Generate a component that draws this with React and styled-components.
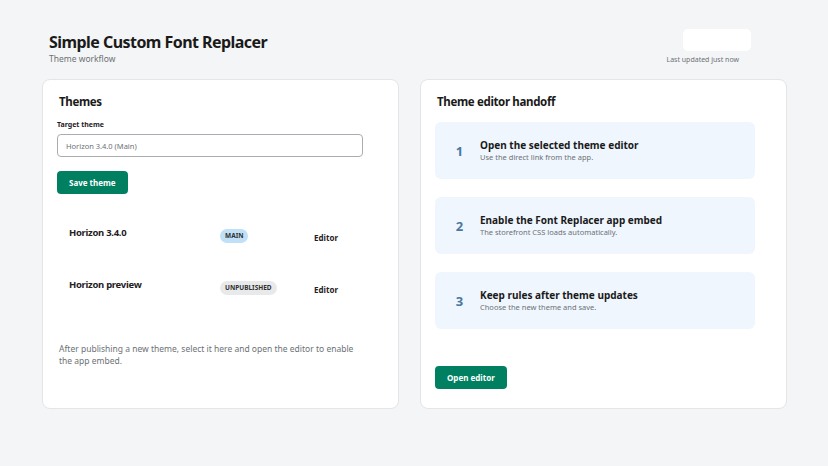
import styled, { createGlobalStyle } from 'styled-components';

const GlobalStyle = createGlobalStyle`
  body {
    margin: 0;
    background: #f4f5f7;
    font-family: 'Noto Sans', 'Open Sans', sans-serif;
    color: #1f2124;
  }
`;

const themes = [
  { name: 'Horizon 3.4.0', role: 'MAIN', tone: 'main' },
  { name: 'Horizon preview', role: 'UNPUBLISHED', tone: 'draft' },
];

const steps = [
  { title: 'Open the selected theme editor', text: 'Use the direct link from the app.' },
  { title: 'Enable the Font Replacer app embed', text: 'The storefront CSS loads automatically.' },
  { title: 'Keep rules after theme updates', text: 'Choose the new theme and save.' },
];

const App = () => {
  return (
    <Page>
      <GlobalStyle />
      <Header>
        <div>
          <Title>Simple Custom Font Replacer</Title>
          <Subtitle>Theme workflow</Subtitle>
        </div>
        <Status>
          <StatusBox />
          <StatusText>Last updated just now</StatusText>
        </Status>
      </Header>
      <Columns>
        <Card>
          <CardTitle>Themes</CardTitle>
          <Label htmlFor="theme">Target theme</Label>
          <Select id="theme">Horizon 3.4.0 (Main)</Select>
          <Button type="button">Save theme</Button>
          <ThemeList>
            {themes.map((t) => (
              <ThemeRow key={t.name}>
                <ThemeName>{t.name}</ThemeName>
                <Badge $tone={t.tone}>{t.role}</Badge>
                <EditorLink>Editor</EditorLink>
              </ThemeRow>
            ))}
          </ThemeList>
          <Note>
            After publishing a new theme, select it here and open the editor to enable
            the app embed.
          </Note>
        </Card>
        <Card>
          <CardTitle $right>Theme editor handoff</CardTitle>
          <Steps>
            {steps.map((s, i) => (
              <Step key={s.title}>
                <StepNum>{i + 1}</StepNum>
                <div>
                  <StepTitle>{s.title}</StepTitle>
                  <StepText>{s.text}</StepText>
                </div>
              </Step>
            ))}
          </Steps>
          <Button type="button" $bottom>Open editor</Button>
        </Card>
      </Columns>
    </Page>
  );
};

export default App;

const Page = styled.div`
  padding: 29px 42px 0;
`;

const Header = styled.header`
  display: flex;
  justify-content: space-between;
  align-items: flex-start;
  padding: 0 35px 0 7px;
  height: 50px;
`;

const Title = styled.h1`
  margin: 3px 0 0;
  font-size: 16px;
  font-weight: 700;
  letter-spacing: -0.55px;
  line-height: 21px;
  color: #1a1a1a;
`;

const Subtitle = styled.div`
  font-size: 8.5px;
  color: #6d7175;
  line-height: 11px;
`;

const Status = styled.div`
  display: flex;
  flex-direction: column;
  align-items: flex-end;
`;

const StatusBox = styled.div`
  width: 68px;
  height: 22px;
  background: #fff;
  border-radius: 5px;
`;

const StatusText = styled.div`
  margin: 4px 12px 0 0;
  font-size: 7px;
  color: #6d7175;
`;

const Columns = styled.div`
  display: grid;
  grid-template-columns: 357px 367px;
  gap: 21px;
`;

const Card = styled.section`
  height: 330px;
  box-sizing: border-box;
  background: #fff;
  border: 1px solid #e4e5e7;
  border-radius: 8px;
  padding: 14px 14px;
  display: flex;
  flex-direction: column;
  align-items: flex-start;
`;

const CardTitle = styled.h2`
  margin: 0 0 ${(p) => (p.$right ? '12px' : '10px')} 2px;
  font-size: 11.5px;
  font-weight: 700;
  letter-spacing: -0.35px;
  line-height: 16px;
  color: #1a1a1a;
`;

const Label = styled.label`
  font-size: 7px;
  font-weight: 700;
  margin-bottom: 5px;
  line-height: 9px;
`;

const Select = styled.div`
  width: 306px;
  height: 23px;
  box-sizing: border-box;
  border: 1px solid #a9acb0;
  border-radius: 4px;
  padding: 0 8px;
  font-size: 7.5px;
  color: #6d7175;
  display: flex;
  align-items: center;
`;

const Button = styled.button`
  margin-top: ${(p) => (p.$bottom ? 'auto' : '14px')};
  margin-bottom: ${(p) => (p.$bottom ? '5px' : '0')};
  height: 23px;
  padding: 0 12px;
  border: none;
  border-radius: 4px;
  background: #008060;
  color: #fff;
  font-family: inherit;
  font-size: 8px;
  font-weight: 700;
  cursor: pointer;
`;

const ThemeList = styled.div`
  margin-top: 32px;
  width: 100%;
  display: flex;
  flex-direction: column;
  gap: 34px;
`;

const ThemeRow = styled.div`
  display: grid;
  grid-template-columns: 151px 94px 1fr;
  align-items: start;
  padding-left: 12px;
`;

const ThemeName = styled.div`
  font-size: 9.5px;
  font-weight: 700;
  letter-spacing: -0.3px;
  line-height: 14px;
`;

const Badge = styled.span`
  justify-self: start;
  margin-top: 3px;
  padding: 0 5px;
  height: 14px;
  line-height: 14px;
  border-radius: 7px;
  font-size: 6.5px;
  font-weight: 700;
  color: #303030;
  background: ${(p) => (p.$tone === 'main' ? '#bfe0f7' : '#e8e9eb')};
`;

const EditorLink = styled.span`
  margin-top: 6px;
  font-size: 8px;
  font-weight: 700;
  line-height: 12px;
`;

const Note = styled.p`
  margin: 47px 0 0 2px;
  width: 300px;
  font-size: 8.5px;
  line-height: 12px;
  color: #6d7175;
`;

const Steps = styled.div`
  display: flex;
  flex-direction: column;
  gap: 18px;
`;

const Step = styled.div`
  width: 320px;
  height: 57px;
  box-sizing: border-box;
  background: #eff6fd;
  border-radius: 6px;
  display: flex;
  align-items: center;
  padding-left: 20px;
  gap: 16px;
`;

const StepNum = styled.div`
  width: 9px;
  font-size: 13px;
  font-weight: 700;
  color: #4a78a3;
  text-align: center;
`;

const StepTitle = styled.div`
  font-size: 10px;
  font-weight: 700;
  line-height: 14px;
  color: #1a1a1a;
`;

const StepText = styled.div`
  font-size: 7.5px;
  line-height: 11px;
  color: #6d7175;
`;
